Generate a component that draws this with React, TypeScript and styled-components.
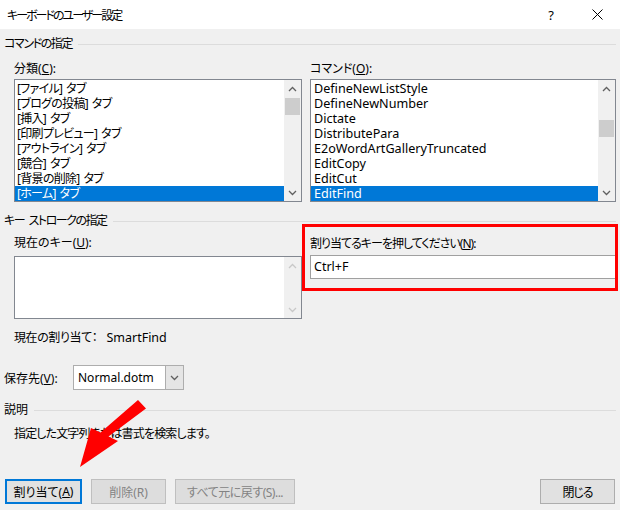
import React from 'react';
import styled, { createGlobalStyle } from 'styled-components';

const GlobalStyle = createGlobalStyle`
  html, body {
    margin: 0;
    padding: 0;
    background: #f0f0f0;
  }
  body {
    font-family: "Noto Sans", "Noto Sans CJK JP", sans-serif;
    font-size: 12px;
    font-feature-settings: "palt";
    color: #000;
  }
`;

const categories = [
  '[ファイル] タブ',
  '[ブログの投稿] タブ',
  '[挿入] タブ',
  '[印刷プレビュー] タブ',
  '[アウトライン] タブ',
  '[競合] タブ',
  '[背景の削除] タブ',
  '[ホーム] タブ'
];

const commands = [
  'DefineNewListStyle',
  'DefineNewNumber',
  'Dictate',
  'DistributePara',
  'E2oWordArtGalleryTruncated',
  'EditCopy',
  'EditCut',
  'EditFind'
];

const Chevron: React.FC<{ up?: boolean; color?: string }> = ({ up, color = '#606060' }) => (
  <svg width="9" height="6" viewBox="0 0 9 6">
    <polyline
      points={up ? '1,5 4.5,1.5 8,5' : '1,1 4.5,4.5 8,1'}
      fill="none"
      stroke={color}
      strokeWidth="1.3"
    />
  </svg>
);

const ScrollBar: React.FC<{ thumbTop?: number; disabled?: boolean }> = ({ thumbTop, disabled }) => (
  <Scroll>
    <ScrollArrow>
      <Chevron up color={disabled ? '#c8c8c8' : '#606060'} />
    </ScrollArrow>
    <Track>{thumbTop !== undefined && <Thumb style={{ marginTop: thumbTop }} />}</Track>
    <ScrollArrow>
      <Chevron color={disabled ? '#c8c8c8' : '#606060'} />
    </ScrollArrow>
  </Scroll>
);

interface ListProps {
  items: string[];
  selected: number;
  thumbTop: number;
  indent: number;
  latin?: boolean;
}

const ListBox: React.FC<ListProps> = ({ items, selected, thumbTop, indent, latin }) => (
  <Box height={123}>
    <Rows>
      {items.map((item, i) => (
        <Row key={item} selected={i === selected} indent={indent} latin={latin}>
          {item}
        </Row>
      ))}
    </Rows>
    <ScrollBar thumbTop={thumbTop} />
  </Box>
);

export default function App() {
  return (
    <>
      <GlobalStyle />
      <Dialog>
        <TitleBar>
          <Title>キーボードのユーザー設定</Title>
          <CaptionButton>?</CaptionButton>
          <CaptionButton>
            <svg width="11" height="11" viewBox="0 0 11 11">
              <path d="M0.5 0.5 L10.5 10.5 M10.5 0.5 L0.5 10.5" stroke="#000" strokeWidth="1" />
            </svg>
          </CaptionButton>
        </TitleBar>

        <Body>
          <GroupHeader tracking={-1.4}>コマンドの指定</GroupHeader>
          <Columns top={9}>
            <Column>
              <Label>
                分類(<u>C</u>):
              </Label>
              <ListBox items={categories} selected={7} thumbTop={1} indent={2} />
            </Column>
            <Column>
              <Label>
                コマンド(<u>O</u>):
              </Label>
              <ListBox items={commands} selected={7} thumbTop={23} indent={3} latin />
            </Column>
          </Columns>

          <GroupHeader top={11} tracking={-1.5}>
            キー{'\u2002'}ストロークの指定
          </GroupHeader>
          <Columns top={6}>
            <Column>
              <Label>
                現在のキー(<u>U</u>):
              </Label>
              <Box height={63} top={3}>
                <Rows />
                <ScrollBar disabled />
              </Box>
            </Column>
            <Column>
              <Highlight>
                <Label offset={1} tracking={-1}>
                  割り当てるキーを押してください(<u>N</u>):
                </Label>
                <KeyInput>Ctrl+F</KeyInput>
                <RedFrame />
              </Highlight>
            </Column>
          </Columns>

          <Assigned>
            <AssignedLabel>現在の割り当て：</AssignedLabel>
            <AssignedValue>SmartFind</AssignedValue>
          </Assigned>

          <SaveRow>
            <SaveLabel>
              保存先(<u>V</u>):
            </SaveLabel>
            <Combo>
              <ComboValue>Normal.dotm</ComboValue>
              <ComboButton>
                <Chevron />
              </ComboButton>
            </Combo>
          </SaveRow>

          <GroupHeader top={12}>説明</GroupHeader>
          <Description>指定した文字列または書式を検索します。</Description>

          <ButtonRow>
            <Button width={77} primary>
              割り当て(<u>A</u>)
            </Button>
            <Button width={75} disabled>
              削除(R)
            </Button>
            <Button width={120} disabled tracking={-0.5}>
              すべて元に戻す(S)...
            </Button>
            <Spacer />
            <Button width={75} tracking={-1}>
              閉じる
            </Button>
          </ButtonRow>
        </Body>

        <Arrow width="620" height="510" viewBox="0 0 620 510">
          <polygon
            points="80,467 91,428 100.5,432.5 138,400 146,408.5 108.5,436.5 118,441"
            fill="#ff0000"
          />
        </Arrow>
      </Dialog>
    </>
  );
}

const Dialog = styled.div`
  position: relative;
  width: 620px;
  height: 510px;
  background: #f0f0f0;
  display: flex;
  flex-direction: column;
  overflow: hidden;
`;

const TitleBar = styled.div`
  height: 29px;
  background: #fff;
  display: flex;
  align-items: stretch;
  padding-left: 7px;
`;

const Title = styled.div`
  flex: 1;
  display: flex;
  align-items: center;
  letter-spacing: -2px;
`;

const CaptionButton = styled.div`
  width: 46px;
  display: flex;
  align-items: center;
  justify-content: center;
  font-size: 13px;
`;

const Body = styled.div`
  flex: 1;
  display: flex;
  flex-direction: column;
  padding: 7px 4px 0 4px;
`;

const GroupHeader = styled.div<{ top?: number; tracking?: number }>`
  display: flex;
  align-items: center;
  gap: 6px;
  height: 16px;
  line-height: 16px;
  margin-top: ${p => p.top || 0}px;
  letter-spacing: ${p => p.tracking || 0}px;
  white-space: nowrap;

  &::after {
    content: '';
    flex: 1;
    height: 1px;
    background: #dcdcdc;
  }
`;

const Columns = styled.div<{ top: number }>`
  display: grid;
  grid-template-columns: 288px 306px;
  column-gap: 8px;
  padding-left: 10px;
  margin-top: ${p => p.top}px;
`;

const Column = styled.div`
  display: flex;
  flex-direction: column;
`;

const Label = styled.div<{ offset?: number; tracking?: number }>`
  height: 16px;
  line-height: 16px;
  margin-top: ${p => p.offset || 0}px;
  margin-bottom: 2px;
  letter-spacing: ${p => p.tracking || 0}px;
  white-space: nowrap;
`;

const Box = styled.div<{ height: number; top?: number }>`
  display: flex;
  height: ${p => p.height}px;
  margin-top: ${p => p.top || 0}px;
  border: 1px solid #828790;
  background: #fff;
  box-sizing: border-box;
`;

const Rows = styled.div`
  flex: 1;
  padding-top: 1px;
  overflow: hidden;
`;

const Row = styled.div<{ selected: boolean; indent: number; latin?: boolean }>`
  height: 15px;
  line-height: 15px;
  padding-left: ${p => p.indent}px;
  white-space: pre;
  font-size: ${p => (p.latin ? 12.6 : 12)}px;
  letter-spacing: ${p => (p.latin ? 0 : -0.7)}px;
  word-spacing: ${p => (p.latin ? 0 : 1.5)}px;
  background: ${p => (p.selected ? '#0078d7' : 'transparent')};
  color: ${p => (p.selected ? '#fff' : '#000')};
`;

const Scroll = styled.div`
  width: 17px;
  display: flex;
  flex-direction: column;
  background: #f0f0f0;
`;

const ScrollArrow = styled.div`
  height: 17px;
  display: flex;
  align-items: center;
  justify-content: center;
`;

const Track = styled.div`
  flex: 1;
  display: flex;
  flex-direction: column;
  align-items: center;
`;

const Thumb = styled.div`
  width: 15px;
  height: 17px;
  background: #cdcdcd;
`;

const Highlight = styled.div`
  position: relative;
  display: flex;
  flex-direction: column;
`;

const RedFrame = styled.div`
  position: absolute;
  left: -8px;
  top: -11px;
  width: 316px;
  height: 67px;
  border: 3px solid #ff0000;
  box-sizing: border-box;
  pointer-events: none;
`;

const KeyInput = styled.div`
  height: 24px;
  margin-top: 1px;
  box-sizing: border-box;
  border: 1px solid #a0a0a0;
  background: #fff;
  padding-left: 3px;
  line-height: 22px;
  font-size: 12.5px;
`;

const Assigned = styled.div`
  margin-top: 11px;
  padding-left: 10px;
  height: 16px;
  line-height: 16px;
  display: flex;
`;

const AssignedLabel = styled.span`
  letter-spacing: -0.4px;
`;

const AssignedValue = styled.span`
  margin-left: 9px;
  font-size: 12.5px;
`;

const SaveRow = styled.div`
  margin-top: 19px;
  display: flex;
  align-items: center;
  height: 25px;
`;

const SaveLabel = styled.div`
  width: 69px;
  white-space: nowrap;
`;

const Combo = styled.div`
  width: 111px;
  height: 25px;
  box-sizing: border-box;
  border: 1px solid #adadad;
  background: #fff;
  display: flex;
`;

const ComboValue = styled.div`
  flex: 1;
  padding-left: 4px;
  line-height: 23px;
`;

const ComboButton = styled.div`
  width: 17px;
  border-left: 1px solid #adadad;
  background: #e5e5e5;
  display: flex;
  align-items: center;
  justify-content: center;
`;

const Description = styled.div`
  margin-top: 8px;
  padding-left: 10px;
  height: 16px;
  line-height: 16px;
  letter-spacing: -0.85px;
`;

const ButtonRow = styled.div`
  margin-top: 37px;
  margin-left: 1px;
  margin-right: 1px;
  display: flex;
  gap: 9px;
`;

const Spacer = styled.div`
  flex: 1;
`;

const Button = styled.div<{ width: number; primary?: boolean; disabled?: boolean; tracking?: number }>`
  width: ${p => p.width}px;
  height: 25px;
  box-sizing: border-box;
  display: flex;
  align-items: center;
  justify-content: center;
  white-space: nowrap;
  letter-spacing: ${p => p.tracking || 0}px;
  background: ${p => (p.disabled ? '#dddddd' : '#e1e1e1')};
  border: ${p => (p.primary ? '2px solid #0078d7' : `1px solid ${p.disabled ? '#bfbfbf' : '#adadad'}`)};
  color: ${p => (p.disabled ? '#838383' : '#000')};
`;

const Arrow = styled.svg`
  position: absolute;
  left: 0;
  top: 0;
  pointer-events: none;
`;
